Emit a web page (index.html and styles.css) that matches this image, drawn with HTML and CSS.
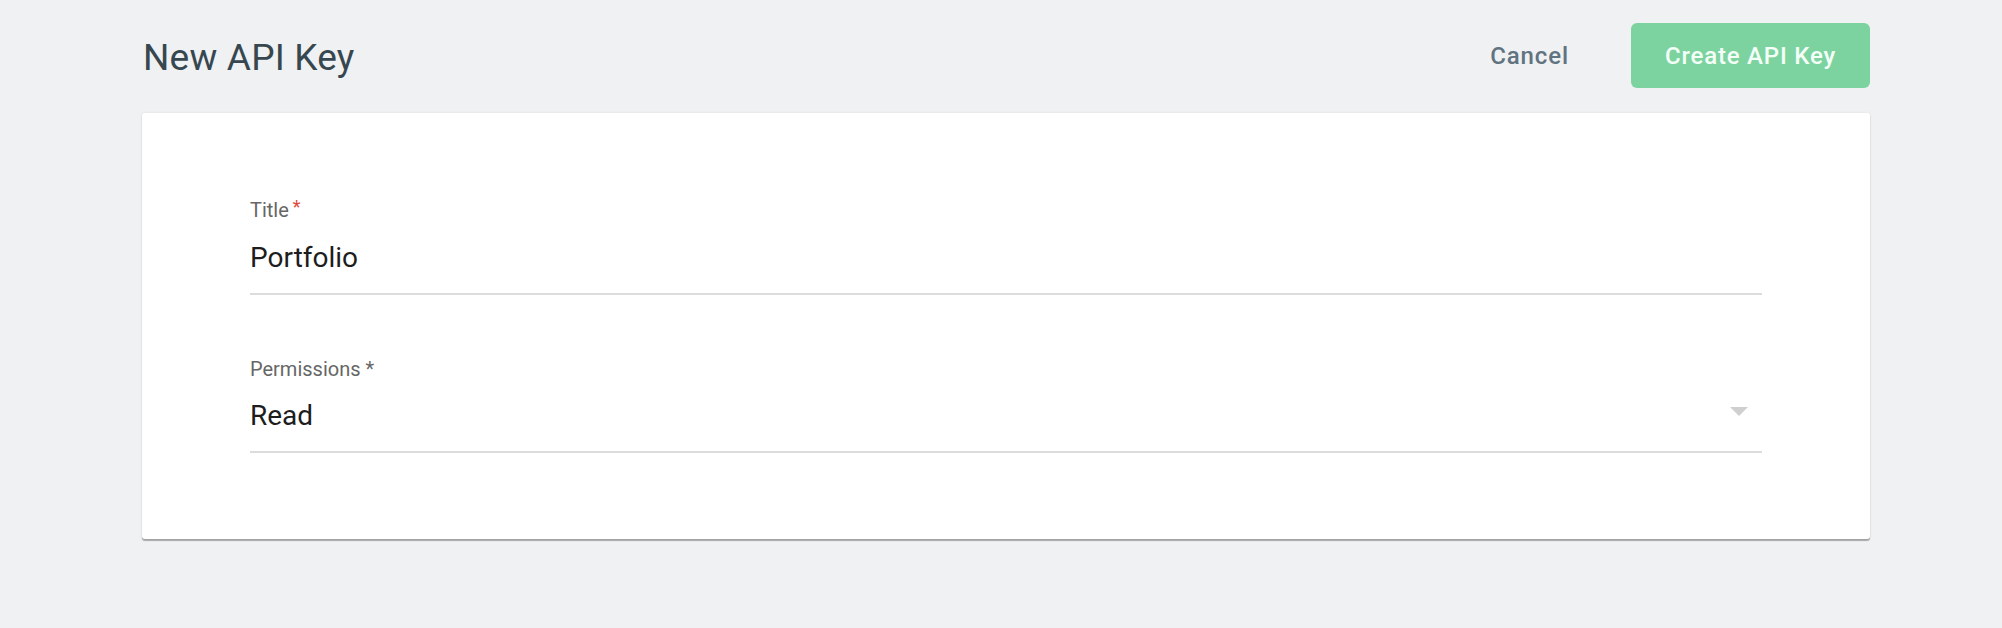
FILE: index.html
```html
<!DOCTYPE html>
<html lang="en">
<head>
<meta charset="utf-8">
<title>New API Key</title>
<link rel="stylesheet" href="styles.css">
</head>
<body>
<div class="page">
  <header class="header">
    <h1 class="page-title">New API Key</h1>
    <div class="actions">
      <button class="btn-text" type="button">Cancel</button>
      <button class="btn-primary" type="button">Create API Key</button>
    </div>
  </header>
  <section class="card">
    <div class="field">
      <label class="field-label">Title<span class="req-red">*</span></label>
      <div class="field-input">Portfolio</div>
    </div>
    <div class="field">
      <label class="field-label">Permissions *</label>
      <div class="field-input field-select">
        <span>Read</span>
        <svg class="caret" width="18" height="9" viewBox="0 0 18 9"><path d="M0 0 L18 0 L9 9 Z" fill="#cfcfcf"/></svg>
      </div>
    </div>
  </section>
</div>
</body>
</html>
```

FILE: styles.css
```css
html, body {
  margin: 0;
  padding: 0;
}
body {
  background: #f0f1f3;
  font-family: Roboto, "Liberation Sans", Arial, sans-serif;
  width: 2002px;
  height: 628px;
  overflow: hidden;
}
.page {
  width: 1728px;
  margin-left: 142px;
  padding-top: 23px;
}
.header {
  display: flex;
  align-items: center;
  justify-content: space-between;
  height: 65px;
  margin-bottom: 25px;
}
.page-title {
  margin: 4px 0 0 1px;
  font-size: 37px;
  line-height: 42px;
  font-weight: 400;
  letter-spacing: 0.2px;
  color: #37474f;
}
.actions {
  display: flex;
  align-items: center;
  gap: 62px;
  height: 65px;
}
.btn-text {
  background: none;
  border: 0;
  padding: 0;
  font-family: inherit;
  font-size: 24px;
  line-height: 28px;
  font-weight: 500;
  letter-spacing: 0.9px;
  color: #5f7380;
}
.btn-primary {
  height: 65px;
  width: 239px;
  padding: 0;
  border: 0;
  border-radius: 6px;
  background: #7dd3a0;
  color: #f4fff8;
  font-family: inherit;
  font-size: 24px;
  line-height: 28px;
  font-weight: 500;
  letter-spacing: 0.8px;
}
.card {
  background: #fff;
  border-radius: 3px;
  box-shadow: 0 2px 1px rgba(0, 0, 0, 0.3), 0 0 3px rgba(0, 0, 0, 0.08);
  padding: 85px 108px 86px;
  display: flex;
  flex-direction: column;
  gap: 62px;
}
.field {
  display: flex;
  flex-direction: column;
  gap: 19px;
}
.field-label {
  font-size: 20px;
  line-height: 24px;
  color: #666;
}
.req-red {
  color: #e0463a;
  font-size: 18px;
  position: relative;
  top: -4px;
  margin-left: 4px;
}
.field-input {
  font-size: 28px;
  line-height: 32px;
  color: #1d1d1d;
  padding-bottom: 19px;
  border-bottom: 2px solid #dcdcdc;
}
.field-select {
  display: flex;
  align-items: center;
  justify-content: space-between;
}
.caret {
  margin-right: 14px;
  margin-top: -9px;
}
```
